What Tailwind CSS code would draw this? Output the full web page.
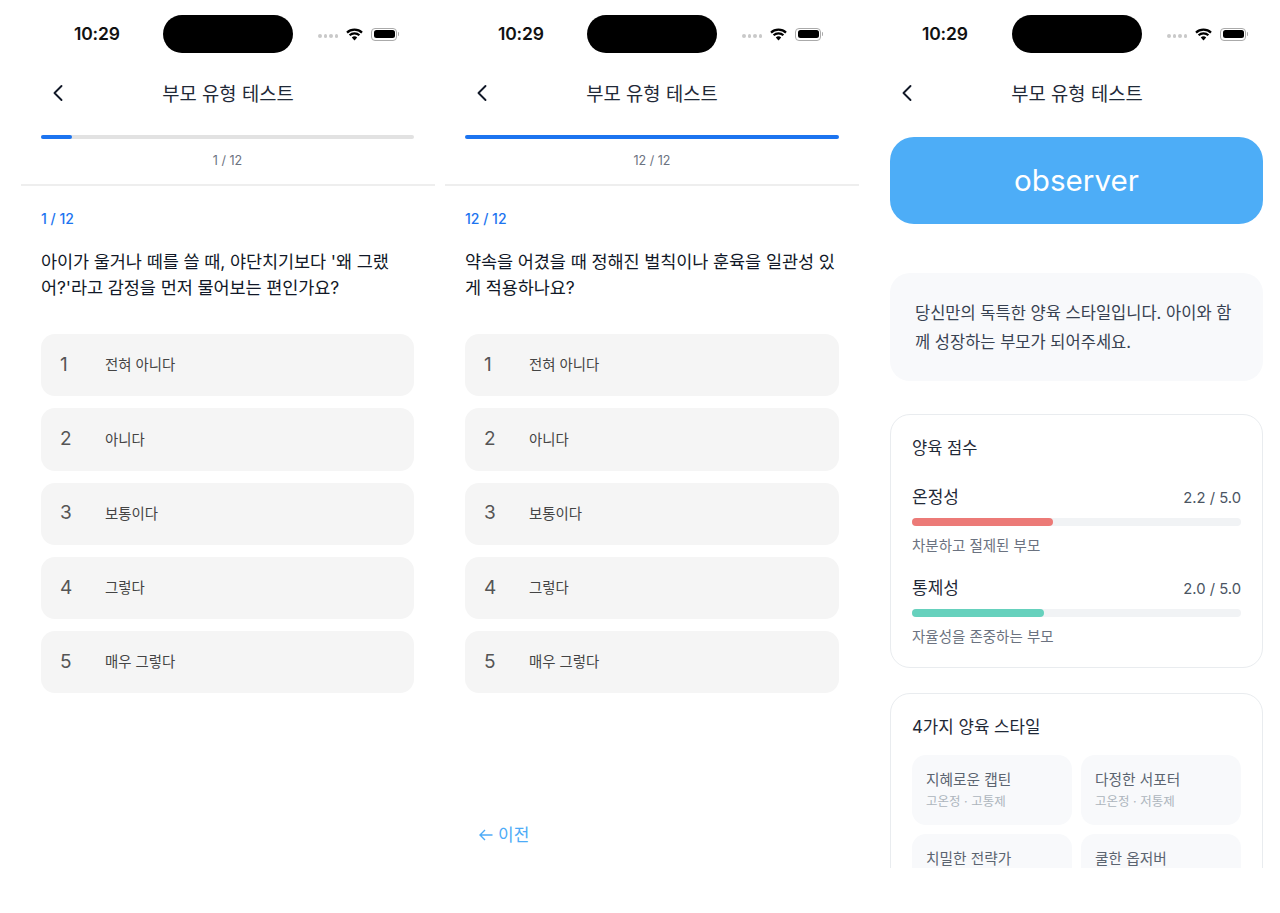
<!DOCTYPE html>
<html lang="ko">
<head>
    <meta charset="UTF-8">
    <meta name="viewport" content="width=device-width, initial-scale=1.0">
    <title>부모 유형 테스트</title>
    <script src="https://cdn.jsdelivr.net/npm/@tailwindcss/browser@4"></script>
</head>
<body class="bg-white font-['Inter','Noto_Sans_CJK_KR',sans-serif] text-[#1f2937] overflow-hidden">

    <div class="flex h-[868px] w-[1280px] overflow-hidden pl-[21px] gap-[10px]">

        <!-- 화면 1 -->
        <section class="w-[414px] shrink-0 flex flex-col">
            <div class="h-[68px] shrink-0 pt-[15px] grid grid-cols-[142px_130px_142px]">
                <div class="h-[38px] flex items-center pl-[53px] text-[17.5px] font-semibold text-[#111] tracking-[-0.2px]">10:29</div>
                <div class="h-[38px] rounded-[19px] bg-black"></div>
                <div class="h-[38px] flex items-center pl-[25px]">
                    <div class="flex gap-[2px] w-[20px] mt-[4px]"><span class="w-[3.5px] h-[3.5px] rounded-full bg-[#c9c9c9]"></span><span class="w-[3.5px] h-[3.5px] rounded-full bg-[#c9c9c9]"></span><span class="w-[3.5px] h-[3.5px] rounded-full bg-[#c9c9c9]"></span><span class="w-[3.5px] h-[3.5px] rounded-full bg-[#c9c9c9]"></span></div>
                    <svg class="ml-[8px]" width="17" height="13" viewBox="0 0 17 13"><path d="M1 4.6C5 .7 12 .7 16 4.6M3.6 7.3C6.2 4.8 10.8 4.8 13.4 7.3" fill="none" stroke="#000" stroke-width="2.2"/><path d="M5.8 9.4C7.3 8 9.7 8 11.2 9.4L8.5 12.4Z" fill="#000"/></svg>
                    <div class="ml-[8px] w-[26px] h-[13px] rounded-[4px] border border-[#aaa] p-[1.5px]"><div class="w-full h-full rounded-[2.5px] bg-black"></div></div>
                    <div class="w-[1.5px] h-[4px] bg-[#aaa] ml-[0.5px] rounded-r"></div>
                </div>
            </div>
            <div class="h-[50px] shrink-0 flex items-center justify-center relative text-[18.75px] pt-[5px] text-[#1f2937]">
                <svg class="absolute left-[30px] top-[16px]" width="14" height="18" viewBox="0 0 14 18"><path d="M10.5 2 3.5 9l7 7" fill="none" stroke="#111827" stroke-width="1.9" stroke-linecap="round" stroke-linejoin="round"/></svg>
                부모 유형 테스트
            </div>
            <div class="pl-[20px] pr-[21px] pt-[17px] h-[68px] shrink-0 border-b-2 border-[#eeeeee]">
                <div class="h-[4px] rounded-full bg-[#e2e2e2]"><div class="h-full w-[31px] rounded-full bg-[#1c74f0]"></div></div>
                <div class="mt-[14px] text-center text-[12.5px] leading-[16px] text-[#6b7280]">1 / 12</div>
            </div>
            <div class="pl-[20px] pr-[21px] pt-[23px]">
                <div class="text-[14px] leading-[20px] font-medium text-[#1c74f0]">1 / 12</div>
                <p class="mt-[20px] text-[17.5px] leading-[26px] text-[#111827] tracking-[-0.1px]">아이가 울거나 떼를 쓸 때, 야단치기보다 '왜 그랬<br>어?'라고 감정을 먼저 물어보는 편인가요?</p>
                <div class="mt-[33px] flex flex-col gap-[12px]">
                    <div class="h-[62.25px] rounded-[14px] bg-[#f5f5f5] flex items-center pl-[19px]"><span class="w-[45px] text-[19px] text-[#555]">1</span><span class="text-[14.4px] text-[#444]">전혀 아니다</span></div>
                    <div class="h-[62.25px] rounded-[14px] bg-[#f5f5f5] flex items-center pl-[19px]"><span class="w-[45px] text-[19px] text-[#555]">2</span><span class="text-[14.4px] text-[#444]">아니다</span></div>
                    <div class="h-[62.25px] rounded-[14px] bg-[#f5f5f5] flex items-center pl-[19px]"><span class="w-[45px] text-[19px] text-[#555]">3</span><span class="text-[14.4px] text-[#444]">보통이다</span></div>
                    <div class="h-[62.25px] rounded-[14px] bg-[#f5f5f5] flex items-center pl-[19px]"><span class="w-[45px] text-[19px] text-[#555]">4</span><span class="text-[14.4px] text-[#444]">그렇다</span></div>
                    <div class="h-[62.25px] rounded-[14px] bg-[#f5f5f5] flex items-center pl-[19px]"><span class="w-[45px] text-[19px] text-[#555]">5</span><span class="text-[14.4px] text-[#444]">매우 그렇다</span></div>
                </div>
            </div>
        </section>

        <!-- 화면 2 -->
        <section class="w-[414px] shrink-0 flex flex-col">
            <div class="h-[68px] shrink-0 pt-[15px] grid grid-cols-[142px_130px_142px]">
                <div class="h-[38px] flex items-center pl-[53px] text-[17.5px] font-semibold text-[#111] tracking-[-0.2px]">10:29</div>
                <div class="h-[38px] rounded-[19px] bg-black"></div>
                <div class="h-[38px] flex items-center pl-[25px]">
                    <div class="flex gap-[2px] w-[20px] mt-[4px]"><span class="w-[3.5px] h-[3.5px] rounded-full bg-[#c9c9c9]"></span><span class="w-[3.5px] h-[3.5px] rounded-full bg-[#c9c9c9]"></span><span class="w-[3.5px] h-[3.5px] rounded-full bg-[#c9c9c9]"></span><span class="w-[3.5px] h-[3.5px] rounded-full bg-[#c9c9c9]"></span></div>
                    <svg class="ml-[8px]" width="17" height="13" viewBox="0 0 17 13"><path d="M1 4.6C5 .7 12 .7 16 4.6M3.6 7.3C6.2 4.8 10.8 4.8 13.4 7.3" fill="none" stroke="#000" stroke-width="2.2"/><path d="M5.8 9.4C7.3 8 9.7 8 11.2 9.4L8.5 12.4Z" fill="#000"/></svg>
                    <div class="ml-[8px] w-[26px] h-[13px] rounded-[4px] border border-[#aaa] p-[1.5px]"><div class="w-full h-full rounded-[2.5px] bg-black"></div></div>
                    <div class="w-[1.5px] h-[4px] bg-[#aaa] ml-[0.5px] rounded-r"></div>
                </div>
            </div>
            <div class="h-[50px] shrink-0 flex items-center justify-center relative text-[18.75px] pt-[5px] text-[#1f2937]">
                <svg class="absolute left-[30px] top-[16px]" width="14" height="18" viewBox="0 0 14 18"><path d="M10.5 2 3.5 9l7 7" fill="none" stroke="#111827" stroke-width="1.9" stroke-linecap="round" stroke-linejoin="round"/></svg>
                부모 유형 테스트
            </div>
            <div class="px-[20px] pt-[17px] h-[68px] shrink-0 border-b-2 border-[#eeeeee]">
                <div class="h-[4px] rounded-full bg-[#1c74f0]"></div>
                <div class="mt-[14px] text-center text-[12.5px] leading-[16px] text-[#6b7280]">12 / 12</div>
            </div>
            <div class="px-[20px] pt-[23px]">
                <div class="text-[14px] leading-[20px] font-medium text-[#1c74f0]">12 / 12</div>
                <p class="mt-[20px] text-[17.5px] leading-[26px] text-[#111827] tracking-[-0.1px]">약속을 어겼을 때 정해진 벌칙이나 훈육을 일관성 있<br>게 적용하나요?</p>
                <div class="mt-[33px] flex flex-col gap-[12px]">
                    <div class="h-[62.25px] rounded-[14px] bg-[#f5f5f5] flex items-center pl-[19px]"><span class="w-[45px] text-[19px] text-[#555]">1</span><span class="text-[14.4px] text-[#444]">전혀 아니다</span></div>
                    <div class="h-[62.25px] rounded-[14px] bg-[#f5f5f5] flex items-center pl-[19px]"><span class="w-[45px] text-[19px] text-[#555]">2</span><span class="text-[14.4px] text-[#444]">아니다</span></div>
                    <div class="h-[62.25px] rounded-[14px] bg-[#f5f5f5] flex items-center pl-[19px]"><span class="w-[45px] text-[19px] text-[#555]">3</span><span class="text-[14.4px] text-[#444]">보통이다</span></div>
                    <div class="h-[62.25px] rounded-[14px] bg-[#f5f5f5] flex items-center pl-[19px]"><span class="w-[45px] text-[19px] text-[#555]">4</span><span class="text-[14.4px] text-[#444]">그렇다</span></div>
                    <div class="h-[62.25px] rounded-[14px] bg-[#f5f5f5] flex items-center pl-[19px]"><span class="w-[45px] text-[19px] text-[#555]">5</span><span class="text-[14.4px] text-[#444]">매우 그렇다</span></div>
                </div>
                <div class="mt-[129px] pl-[14px] h-[26px] flex items-center gap-[5px] text-[17px] text-[#4dabf7]">
                    <svg width="14" height="12" viewBox="0 0 14 12"><path d="M6 1 1 6l5 5M1 6h12.5" fill="none" stroke="#4dabf7" stroke-width="1.4"/></svg>
                    이전
                </div>
            </div>
        </section>

        <!-- 화면 3: 결과 -->
        <section class="w-[414px] ml-px shrink-0 flex flex-col">
            <div class="h-[68px] shrink-0 pt-[15px] grid grid-cols-[142px_130px_142px]">
                <div class="h-[38px] flex items-center pl-[52px] text-[17.5px] font-semibold text-[#111] tracking-[-0.2px]">10:29</div>
                <div class="h-[38px] rounded-[19px] bg-black"></div>
                <div class="h-[38px] flex items-center pl-[25px]">
                    <div class="flex gap-[2px] w-[20px] mt-[4px]"><span class="w-[3.5px] h-[3.5px] rounded-full bg-[#c9c9c9]"></span><span class="w-[3.5px] h-[3.5px] rounded-full bg-[#c9c9c9]"></span><span class="w-[3.5px] h-[3.5px] rounded-full bg-[#c9c9c9]"></span><span class="w-[3.5px] h-[3.5px] rounded-full bg-[#c9c9c9]"></span></div>
                    <svg class="ml-[8px]" width="17" height="13" viewBox="0 0 17 13"><path d="M1 4.6C5 .7 12 .7 16 4.6M3.6 7.3C6.2 4.8 10.8 4.8 13.4 7.3" fill="none" stroke="#000" stroke-width="2.2"/><path d="M5.8 9.4C7.3 8 9.7 8 11.2 9.4L8.5 12.4Z" fill="#000"/></svg>
                    <div class="ml-[8px] w-[26px] h-[13px] rounded-[4px] border border-[#aaa] p-[1.5px]"><div class="w-full h-full rounded-[2.5px] bg-black"></div></div>
                    <div class="w-[1.5px] h-[4px] bg-[#aaa] ml-[0.5px] rounded-r"></div>
                </div>
            </div>
            <div class="h-[50px] shrink-0 flex items-center justify-center relative text-[18.75px] pt-[5px] text-[#1f2937]">
                <svg class="absolute left-[30px] top-[16px]" width="14" height="18" viewBox="0 0 14 18"><path d="M10.5 2 3.5 9l7 7" fill="none" stroke="#111827" stroke-width="1.9" stroke-linecap="round" stroke-linejoin="round"/></svg>
                부모 유형 테스트
            </div>
            <div class="pl-[20px] pr-[21px] pt-[19px] shrink-0">
                <div class="h-[87px] rounded-[24px] bg-[#4dadf7] flex items-center justify-center text-[29.6px] text-white">observer</div>
                <div class="mt-[49px] h-[108px] rounded-[20px] bg-[#f8f9fb] px-[25px] pt-[26px] text-[16.5px] leading-[29px] text-[#374151]">당신만의 독특한 양육 스타일입니다. 아이와 함<br>께 성장하는 부모가 되어주세요.</div>
                <div class="mt-[33px] h-[254px] rounded-[20px] border border-[#e9ecef] px-[21px] pt-[21px]">
                    <div class="text-[16.5px] leading-[24px] text-[#1f2937]">양육 점수</div>
                    <div class="mt-[26px] flex justify-between items-center h-[24px]"><span class="text-[17px] text-[#1f2937]">온정성</span><span class="text-[14.8px] text-[#4b5563]">2.2 / 5.0</span></div>
                    <div class="mt-[8px] h-[8px] rounded-full bg-[#f1f3f5]"><div class="h-full rounded-full bg-[#ec7a77]" style="width: 43%"></div></div>
                    <div class="mt-[10px] text-[14.5px] leading-[20px] text-[#6b7280]">차분하고 절제된 부모</div>
                    <div class="mt-[21px] flex justify-between items-center h-[24px]"><span class="text-[17px] text-[#1f2937]">통제성</span><span class="text-[14.8px] text-[#4b5563]">2.0 / 5.0</span></div>
                    <div class="mt-[8px] h-[8px] rounded-full bg-[#f1f3f5]"><div class="h-full rounded-full bg-[#66d1bd]" style="width: 40%"></div></div>
                    <div class="mt-[10px] text-[14.5px] leading-[20px] text-[#6b7280]">자율성을 존중하는 부모</div>
                </div>
                <div class="mt-[25px] rounded-[20px] border border-[#e9ecef] px-[21px] pt-[21px] pb-[20px]">
                    <div class="text-[16.8px] leading-[24px] text-[#1f2937]">4가지 양육 스타일</div>
                    <div class="mt-[16px] grid grid-cols-2 gap-[9px]">
                        <div class="h-[70px] rounded-[14px] bg-[#f8f9fb] px-[14px] pt-[14px]"><div class="text-[14.7px] leading-[22px] text-[#5b6470]">지혜로운 캡틴</div><div class="text-[12.5px] leading-[22px] text-[#adb5bd]">고온정 · 고통제</div></div>
                        <div class="h-[70px] rounded-[14px] bg-[#f8f9fb] px-[14px] pt-[14px]"><div class="text-[14.7px] leading-[22px] text-[#5b6470]">다정한 서포터</div><div class="text-[12.5px] leading-[22px] text-[#adb5bd]">고온정 · 저통제</div></div>
                        <div class="h-[70px] rounded-[14px] bg-[#f8f9fb] px-[14px] pt-[14px]"><div class="text-[14.7px] leading-[22px] text-[#5b6470]">치밀한 전략가</div></div>
                        <div class="h-[70px] rounded-[14px] bg-[#f8f9fb] px-[14px] pt-[14px]"><div class="text-[14.7px] leading-[22px] text-[#5b6470]">쿨한 옵저버</div></div>
                    </div>
                </div>
            </div>
        </section>
    </div>
</body>
</html>
